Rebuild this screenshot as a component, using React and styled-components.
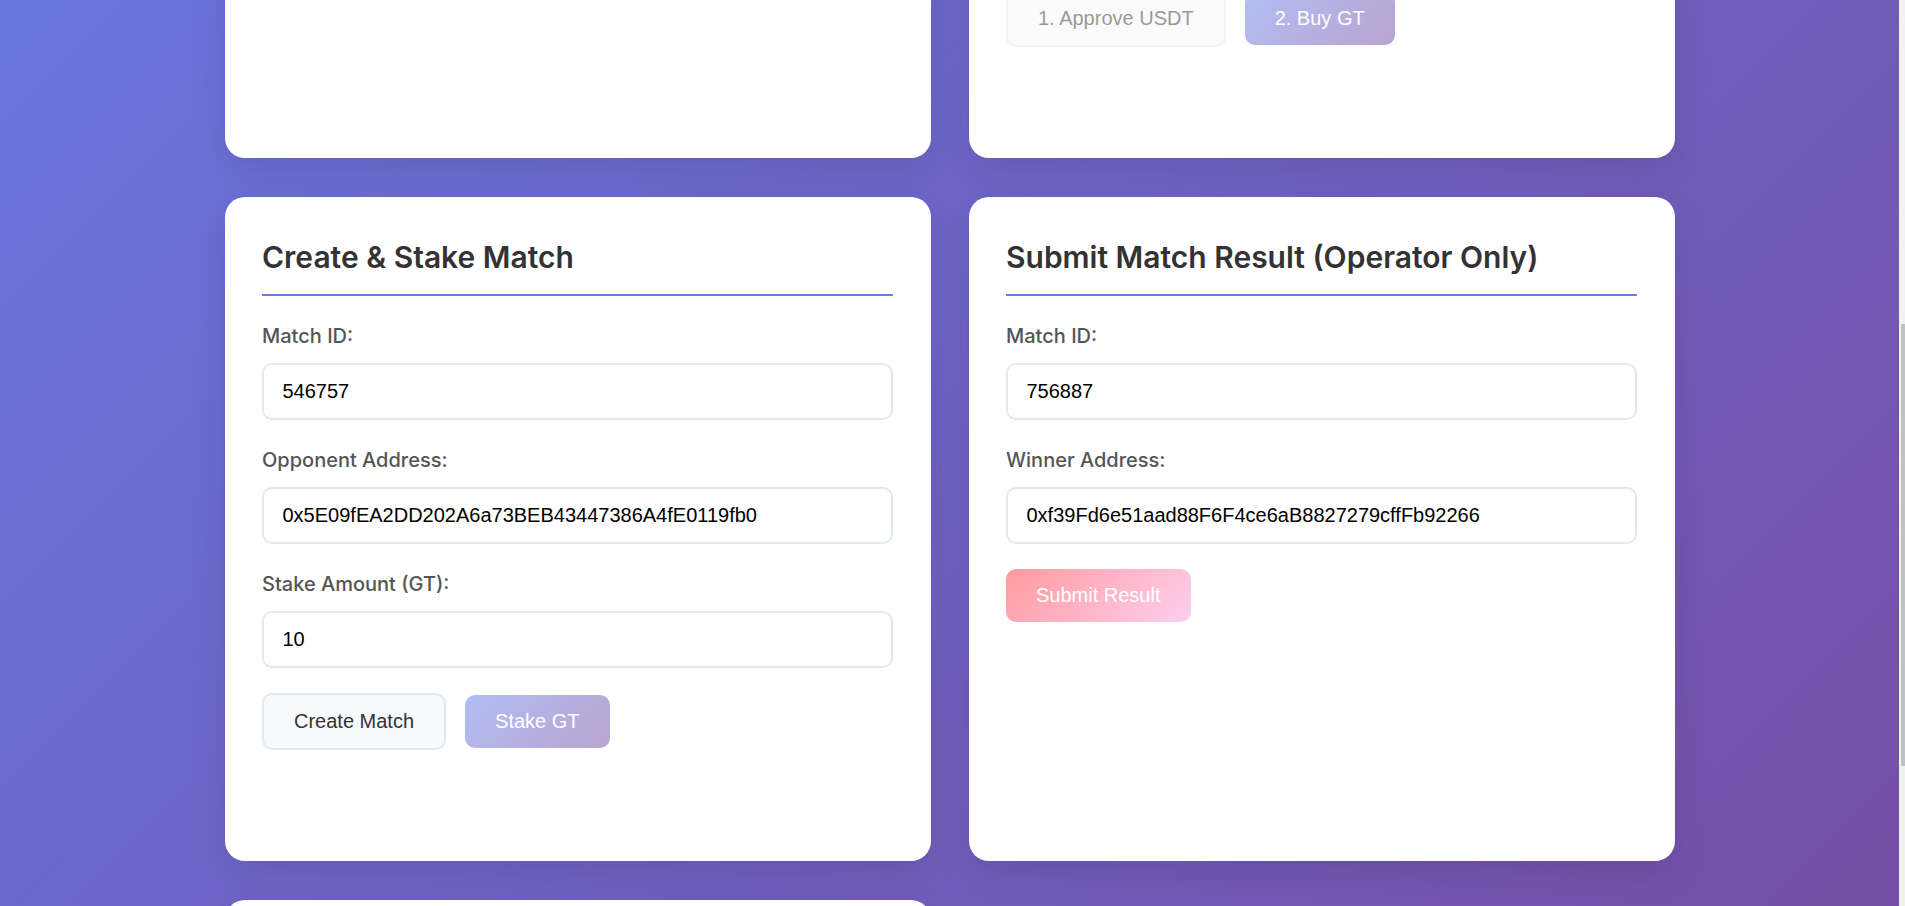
import React, { useLayoutEffect, useRef, useState } from "react";
import styled, { createGlobalStyle, css } from "styled-components";

const GlobalStyle = createGlobalStyle`
  html, body { margin: 0; padding: 0; height: 100%; overflow: hidden; }
  body { font-family: Inter, "Noto Sans", sans-serif; }
  #root { height: 100%; }
  *, *::before, *::after { box-sizing: border-box; }
`;

const Shell = styled.div`
  display: flex;
  height: 100vh;
`;

const Viewport = styled.div`
  flex: 1;
  min-width: 0;
  overflow-y: scroll;
  scrollbar-width: none;
  &::-webkit-scrollbar { display: none; }
`;

const ScrollTrack = styled.div`
  flex: 0 0 6px;
  display: flex;
  flex-direction: column;
  background: #f1f1f1;
`;

const ScrollThumb = styled.div`
  margin-left: 1.5px;
  background: #c1c1c1;
`;

const Page = styled.div`
  min-height: 100%;
  background: linear-gradient(135deg, #667eea 0%, #764ba2 100%);
  padding: 25px 0 37.5px;
`;

const Container = styled.div`
  width: 1450px;
  margin: 0 auto;
`;

const Header = styled.header`
  text-align: center;
  color: #fff;
  margin-bottom: 46.4px;
`;

const Title = styled.h1`
  margin: 0 0 12px;
  font-size: 40px;
  line-height: 48px;
  font-weight: 700;
`;

const Subtitle = styled.p`
  margin: 0;
  font-size: 20px;
  line-height: 28px;
  opacity: 0.9;
`;

const Grid = styled.div`
  display: grid;
  grid-template-columns: 706px 706px;
  column-gap: 38px;
  row-gap: 38.8px;
`;

const Card = styled.section`
  background: #fff;
  border-radius: 20px;
  padding: 37.5px;
  box-shadow: 0 12px 36px rgba(0, 0, 0, 0.1);
`;

const CardTitle = styled.h2`
  margin: 0 0 25px;
  padding-bottom: 13.8px;
  border-bottom: 2px solid #667eea;
  font-size: 30px;
  line-height: 46.2px;
  font-weight: 600;
  color: #333;
`;

const Field = styled.div`
  margin-bottom: 25px;
`;

const Label = styled.label`
  display: block;
  margin-bottom: 11.9px;
  font-size: 20px;
  line-height: 30px;
  font-weight: 500;
  color: #555;
`;

const Input = styled.input`
  display: block;
  width: 100%;
  height: 57px;
  padding: 15px 18.5px;
  border: 2px solid #e2e8f0;
  border-radius: 10px;
  background: #fff;
  font-family: "Liberation Sans", Arial, sans-serif;
  font-size: 20px;
  color: #000;
  outline: none;
`;

const InfoBox = styled.div`
  height: 99.4px;
  margin-bottom: 25px;
  padding: 18px 20px;
  border-radius: 10px;
  background: #f7f8fc;
  font-size: 18px;
  line-height: 32px;
  color: #555;
`;

const InfoRow = styled.div`
  display: flex;
  justify-content: space-between;
  font-size: 20px;
  line-height: 28px;
  color: #555;
  padding: 8px 0;
  border-bottom: 1px solid #eef0f4;
`;

const LogBox = styled.div`
  height: 95.3px;
  padding: 15px 20px;
  border-radius: 10px;
  background: #f7f8fc;
  font-size: 18px;
  color: #777;
`;

const ButtonRow = styled.div`
  display: flex;
  align-items: center;
  gap: 19px;
`;

const StatusArea = styled.div`
  height: 73.4px;
`;

const variants = {
  secondary: css`
    background: #f8f9fa;
    border: 2px solid #e2e8f0;
    color: #333;
  `,
  primary: css`
    background: linear-gradient(135deg, #667eea 0%, #764ba2 100%);
    border: none;
    color: #fff;
  `,
  danger: css`
    background: linear-gradient(135deg, #ff9a9e 0%, #fecfef 100%);
    border: none;
    color: #fff;
  `,
};

const Button = styled.button`
  padding: 15px 30px;
  border-radius: 10px;
  font-family: "Liberation Sans", Arial, sans-serif;
  font-size: 20px;
  line-height: normal;
  cursor: pointer;
  ${(p) => variants[p.$variant || "secondary"]}
  &:disabled {
    opacity: 0.5;
    cursor: not-allowed;
  }
`;

export default function App() {
  const viewportRef = useRef(null);
  const anchorRef = useRef(null);
  const [thumb, setThumb] = useState({ top: 0, height: 0 });

  const updateThumb = () => {
    const vp = viewportRef.current;
    if (!vp) return;
    const { scrollTop, scrollHeight, clientHeight } = vp;
    const height = (clientHeight * clientHeight) / scrollHeight;
    const range = scrollHeight - clientHeight;
    const top = range > 0 ? (scrollTop / range) * (clientHeight - height) : 0;
    setThumb({ top, height });
  };

  useLayoutEffect(() => {
    const vp = viewportRef.current;
    const anchor = anchorRef.current;
    if (!vp || !anchor) return;
    const offset =
      anchor.getBoundingClientRect().top - vp.getBoundingClientRect().top + vp.scrollTop;
    vp.scrollTop = Math.round(offset - 197);
    updateThumb();
  }, []);

  return (
    <>
      <GlobalStyle />
      <Shell>
        <Viewport ref={viewportRef} onScroll={updateThumb}>
          <Page>
            <Container>
              <Header>
                <Title>GameToken Arena</Title>
                <Subtitle>Buy GT, stake on matches and claim your rewards</Subtitle>
              </Header>
              <Grid>
                <Card>
                  <CardTitle>Wallet Info</CardTitle>
                  <InfoRow><span>Account:</span><span>0xf39F...2266</span></InfoRow>
                  <InfoRow><span>USDT Balance:</span><span>1000</span></InfoRow>
                  <InfoRow><span>GT Balance:</span><span>0</span></InfoRow>
                </Card>
                <Card>
                  <CardTitle>Buy GT Tokens</CardTitle>
                  <Field>
                    <Label>USDT Amount:</Label>
                    <Input defaultValue="100" readOnly />
                  </Field>
                  <Field>
                    <Label>GT to Receive:</Label>
                    <Input defaultValue="100" readOnly />
                  </Field>
                  <InfoBox>
                    Exchange rate: 1 USDT = 1 GT
                    <br />
                    USDT allowance: 0
                  </InfoBox>
                  <ButtonRow>
                    <Button $variant="secondary" disabled>1. Approve USDT</Button>
                    <Button $variant="primary" disabled>2. Buy GT</Button>
                  </ButtonRow>
                  <StatusArea />
                </Card>

                <Card ref={anchorRef}>
                  <CardTitle>Create &amp; Stake Match</CardTitle>
                  <Field>
                    <Label>Match ID:</Label>
                    <Input defaultValue="546757" />
                  </Field>
                  <Field>
                    <Label>Opponent Address:</Label>
                    <Input defaultValue="0x5E09fEA2DD202A6a73BEB43447386A4fE0119fb0" />
                  </Field>
                  <Field>
                    <Label>Stake Amount (GT):</Label>
                    <Input defaultValue="10" />
                  </Field>
                  <ButtonRow>
                    <Button $variant="secondary">Create Match</Button>
                    <Button $variant="primary" disabled>Stake GT</Button>
                  </ButtonRow>
                  <StatusArea />
                </Card>
                <Card>
                  <CardTitle>Submit Match Result (Operator Only)</CardTitle>
                  <Field>
                    <Label>Match ID:</Label>
                    <Input defaultValue="756887" />
                  </Field>
                  <Field>
                    <Label>Winner Address:</Label>
                    <Input defaultValue="0xf39Fd6e51aad88F6F4ce6aB8827279cffFb92266" />
                  </Field>
                  <ButtonRow>
                    <Button $variant="danger">Submit Result</Button>
                  </ButtonRow>
                </Card>

                <Card>
                  <CardTitle>Match Details</CardTitle>
                  <LogBox>No match selected.</LogBox>
                </Card>
              </Grid>
            </Container>
          </Page>
        </Viewport>
        <ScrollTrack aria-hidden="true">
          <ScrollThumb style={{ marginTop: thumb.top, height: thumb.height }} />
        </ScrollTrack>
      </Shell>
    </>
  );
}
